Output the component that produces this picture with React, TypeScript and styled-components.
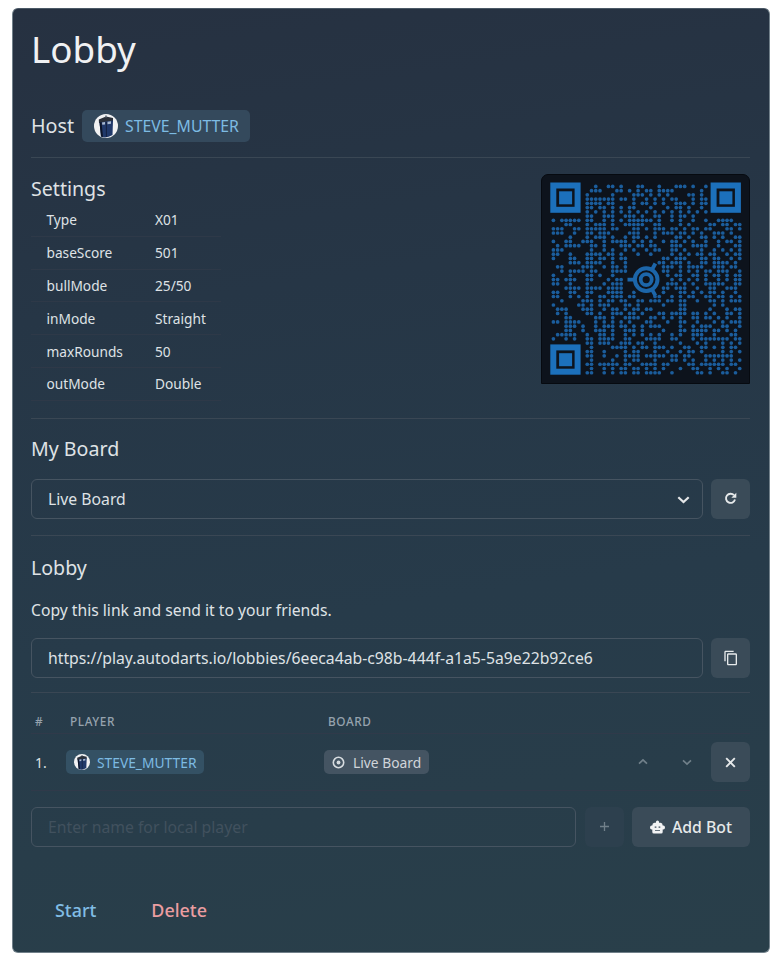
import React from 'react';
import styled, { createGlobalStyle } from 'styled-components';
import { MdContentCopy } from 'react-icons/md';

const Global = createGlobalStyle`
  * { box-sizing: border-box; }
  body { margin: 0; background: #fff; font-family: "Noto Sans", sans-serif; color: #dfe2e5; }
  h1, h2, p { margin: 0; font-weight: 400; }
  svg { display: block; flex: none; }
`;

const Panel = styled.main`
  width: 758px;
  height: 945px;
  margin: 8px 0 5px 12px;
  padding: 0 19px 0 18px;
  border-radius: 6px;
  border: 1px solid #71808a;
  border-top-color: #4b5966;
  background: linear-gradient(172deg, #263141 0%, #263646 30%, #273b4a 62%, #293f4a 100%);
  display: flex;
  flex-direction: column;
`;

const Title = styled.h1`
  height: 89px;
  padding-top: 13px;
  font-size: 36.8px;
  line-height: 54px;
  color: #f0f1f3;
`;

const HostRow = styled.div`
  display: flex;
  align-items: center;
  height: 60px;
  padding-bottom: 4px;
  gap: 8px;
  border-bottom: 1px solid #3a4754;
  font-size: 19.7px;
`;

const UserTag = styled.span<{ $large?: boolean }>`
  display: inline-flex;
  align-items: center;
  height: ${p => (p.$large ? 32 : 24)}px;
  width: ${p => (p.$large ? 168 : 138)}px;
  padding-left: ${p => (p.$large ? 12 : 8)}px;
  gap: 7px;
  border-radius: 5px;
  background: ${p => (p.$large ? '#34495c' : '#345164')};
  color: #7dbbe3;
  font-size: ${p => (p.$large ? 15.8 : 13.8)}px;
  white-space: nowrap;
`;

const SettingsSection = styled.section`
  display: flex;
  justify-content: space-between;
  height: 261px;
  padding-top: 16px;
  border-bottom: 1px solid #3a4754;
`;

const Heading = styled.h2`
  font-size: 19.6px;
  line-height: 30px;
  color: #dfe2e5;
`;

const SettingsList = styled.dl`
  margin: 0;
  width: 190px;
  font-size: 13.7px;
`;

const Setting = styled.div`
  display: flex;
  height: 32.8px;
  align-items: center;
  padding: 0 0 0 15.5px;
  border-bottom: 1px solid #2e3948;
  dt { width: 108.5px; }
  dd { margin: 0; }
`;

const CodeBox = styled.div`
  width: 209px;
  height: 210px;
  border-radius: 7px 7px 0 0;
  background: #0d131c;
  border: 1px solid #060a10;
  overflow: hidden;
`;

const BoardSection = styled.section`
  height: 117px;
  padding-top: 15px;
  border-bottom: 1px solid #3a4754;
`;

const LinkSection = styled(BoardSection)`
  height: 157px;
  padding-top: 17px;
  p { font-size: 15.7px; line-height: 24px; margin-top: 15px; }
`;

const FieldRow = styled.div<{ $top?: number }>`
  display: flex;
  gap: 8px;
  margin-top: ${p => p.$top ?? 16}px;
`;

const Field = styled.div<{ $muted?: boolean }>`
  flex: 1;
  height: 40px;
  display: flex;
  align-items: center;
  justify-content: space-between;
  padding: 0 12px 0 16px;
  border: 1px solid #465461;
  border-radius: 6px;
  font-size: 15.75px;
  color: ${p => (p.$muted ? '#41515e' : '#dfe2e5')};
`;

const Button = styled.button<{ $wide?: boolean; $dim?: boolean }>`
  width: ${p => (p.$wide ? 118 : 39)}px;
  height: 39.5px;
  flex: none;
  padding: 0;
  display: flex;
  align-items: center;
  justify-content: center;
  gap: 7px;
  border: 0;
  border-radius: 6px;
  background: ${p => (p.$dim ? '#2d404e' : '#3a4b58')};
  color: ${p => (p.$dim ? '#71808a' : '#e6e9ea')};
  font: 500 15.8px "Noto Sans", sans-serif;
  margin-left: ${p => (p.$dim ? 1 : 0)}px;
`;

const PlayerGrid = styled.div<{ $head?: boolean }>`
  display: grid;
  grid-template-columns: 35px 258px 314px 44px 29px 39px;
  align-items: center;
  height: ${p => (p.$head ? 41 : 57)}px;
  padding-top: ${p => (p.$head ? 15 : 0)}px;
  border-bottom: 1px solid #303a4a;
  font-size: ${p => (p.$head ? 11.8 : 14)}px;
  font-weight: ${p => (p.$head ? 500 : 400)};
  letter-spacing: ${p => (p.$head ? 0.6 : 0)}px;
  color: ${p => (p.$head ? '#96a3ae' : '#dfe2e5')};
  > :first-child { padding-left: 4px; }
  > [data-head] { padding-left: 4px; }
`;

const BoardTag = styled.span`
  display: inline-flex;
  align-items: center;
  width: 105px;
  height: 24px;
  padding-left: 8px;
  gap: 8px;
  border-radius: 5px;
  background: #445462;
  color: #d0d5da;
  font-size: 13.8px;
`;

const Actions = styled.footer`
  display: flex;
  padding: 49px 0 0 24px;
  gap: 55px;
  font-size: 17.9px;
  line-height: 28px;
  font-weight: 500;
`;

const Action = styled.span<{ $danger?: boolean }>`
  color: ${p => (p.$danger ? '#eb9da1' : '#80bce4')};
`;

const Avatar = ({ size }: { size: number }) => (
  <svg width={size} height={size} viewBox="0 0 24 24">
    <circle cx="12" cy="12" r="12" fill="#f1f2f3" />
    <path d="M4.800 5.500 12 2.500l7 1.500v4l-14 1z" fill="#2b313a" />
    <path d="M5.500 8.500 19 6.500 18.500 21Q12 25 7 22.500z" fill="#20396a" />
    <path d="M5.500 8.500 7.500 8 9 23 7 22.500z" fill="#0c1528" />
    <path d="M8 8.500 11 8v2.500l-2.700.2zM13.500 7.800 17 7.300v2.500l-3.500.4z" fill="#a9bad0" />
    <path d="M12.400 8v15" stroke="#101c35" strokeWidth="0.800" />
    <path d="M12 1.500v2" stroke="#65717c" strokeWidth="1.500" />
  </svg>
);

const Chevron = ({ up, size = 10, color }: { up?: boolean; size?: number; color: string }) => (
  <svg width={size} height={size} viewBox="0 0 10 10" fill="none" stroke={color} strokeWidth="1.700">
    <path d={up ? 'M1 6.700 5 3l4 3.700' : 'M1 3.300 5 7l4-3.700'} />
  </svg>
);

const Refresh = () => (
  <svg width="13" height="13" viewBox="0 0 13 13">
    <path d="M10 3.200A4.600 4.600 0 1 0 11 7.600" fill="none" stroke="currentColor" strokeWidth="1.900" />
    <path d="M12.300.800v5H7.300z" fill="currentColor" />
  </svg>
);

const Close = () => (
  <svg width="11" height="11" viewBox="0 0 11 11" fill="none" stroke="currentColor" strokeWidth="1.900">
    <path d="m1.200 1.200 8.600 8.600M9.800 1.200 1.200 9.800" />
  </svg>
);

const Target = () => (
  <svg width="13" height="13" viewBox="0 0 13 13">
    <circle cx="6.500" cy="6.500" r="5.200" fill="none" stroke="#d7dce0" strokeWidth="1.600" />
    <circle cx="6.500" cy="6.500" r="1.900" fill="#d7dce0" />
  </svg>
);

const Robot = () => (
  <svg width="15" height="14" viewBox="0 0 15 14">
    <path fill="#f2f3f4" fillRule="evenodd" d="M6 2.700a1.600 1.600 0 1 1 3 0h1.500Q12.700 2.900 12.700 5.500h.6Q15 5.700 15 7.500t-1.700 2h-.6v2.500q0 1.500-1.500 1.500H3.800Q2.300 13.500 2.300 12V9.500h-.6Q0 9.300 0 7.500t1.700-2h.6Q2.300 2.900 4.500 2.700zM4.700 6.400v1.300h1.700V6.400zm3.900 0v1.300h1.700V6.400zm-3.600 3.500v.9h5v-.9z" />
  </svg>
);

const Plus = () => (
  <svg width="11" height="11" viewBox="0 0 11 11" stroke="currentColor" strokeWidth="1.300">
    <path d="M5.500 1v9M1 5.500h9" />
  </svg>
);

const leftModules = [
  '..........#..##.#...##', '.........###...##.#.#.', '........#.....#....###', '........#######.##.#..',
  '........####.##....#.#', '........##.##.#.#.##..', '........#.#.#.#.#.#.#.', '........##..###..###.#',
  '#.#####.##..#.#.#.####', '...##...#.###.#..#####', '###..##.#####.##...##.', '###..#..##.###....###.',
  '....#...#.###.#..#.##.', '#..##..###..#.####.#.#', '.#.####..##.#...###.##', '###......#..#.#..#.#..',
  '##..#...####.##.#...#.', '#...##..##.##.#.##....', '....###.####..#..#....', '.##....###..#.##.#....',
  '..#.####.##...####....', '#...#...##.#..#.......', '##.###..##...#.##.....', '##..#...#...#.###.....',
  '...####.####.####.....', '##..##..##...####..#..', '##..#.#.#..##.###.##..', '..#....###.#.##.##..##',
  '#.....##.#.###...##.#.', '.###...###..#.##.#.##.', '.#.#....##.#..###.##.#', '...##.....###.#..####.',
  '##.####...#.#.#.#.#...', '...###.#..#.###.##.#.#', '...##..#..###.#..###.#', '.#####..#..##.#..#.#.#',
  '#..#.#..##.####..##...', '........##.###..###.##', '.........#....####.#.#', '........##..#....#.##.',
  '........##..#..#.####.', '.........#....#..#.##.', '........##.#####.##..#', '.........#..#.#.##.##.',
  '........##..#.#.##.##.',
];

const rightModules = [
  '...#...###.#..#', '##.####......#.', '.#.#.#....##.#.', '#.#.#.##...#.##', '#.#.#..###.#.##',
  '.#...#.##.#..#.', '#.#.#.#.#.#.#.#', '..##..#.##.#...', '##.#..#.#..#..#..####..', '..##....#.#....##.##.##',
  '#.###.##.#.##.##...##.#', '..#.###.##.#.#..###.#..', '#.#....##.#..##.#.#..##', '.#..#.##.#.#..#..#.##.#',
  '.##...###..####..#...##', '#.##..##.#...#..#.#.#.#', '.#....#.#.#.##.##..#.##', '....##.###...##.##..#.#',
  '...##.###.#..##.####.#.', '....###.#.####..###.##.', '....##..#.#.#.##.###..#', '.....#.##..##.#.##.#.##',
  '......#.#.#.#.#..#.#.##', '.....###.#.#..#####..##', '....##.###..#..##..###.', '....#...##.#.#.##.#..#.',
  '..##..#.#.##..##.##.#.#', '.###.##.##..#..##.#.###', '....#...##......#.#....', '##......##.....#...#.##',
  '...##.####.##.#.#..##.#', '.##.#.#.#..##.##.#.#..#', '##...#..##..#...#.#.###', '.###....#..#.###..##..#',
  '....#...##.####.##.#.#.', '.#.#..#.#..###..#...##.', '####..##...#.#######.##', '..#.....#...#.#...#.#.#',
  '#.###.#..##..##.#.#.##.', '..#..#..#.##.#....#.#.#', '#####.##.##...#######..', '..#...##.#.#..#.#.#.#.#',
  '###.##....##.######.##.', '#.#.#...#..##..#.#.#..#', '####..#.....##.#..##.#.',
];

const PITCH = 4.235;

const Finder = ({ x, y }: { x: number; y: number }) => (
  <g transform={`translate(${x} ${y})`}>
    <rect x="3" y="3" width="24.300" height="24.300" fill="none" stroke="#1c70bb" strokeWidth="6" />
    <rect x="8.800" y="8.800" width="13" height="13" fill="#1c70bb" />
  </g>
);

const QrCode = () => (
  <svg width="207" height="208" viewBox="542 175 207 208">
    {leftModules.map((left, r) =>
      (left + (rightModules[r] ?? '')).split('').map((m, c) =>
        m === '#' ? (
          <circle key={`${r}-${c}`} cx={553.4 + c * PITCH} cy={186.4 + r * PITCH} r="1.850" fill="#1b5d9c" />
        ) : null,
      ),
    )}
    <Finder x={550.3} y={182.5} />
    <Finder x={710.6} y={182.5} />
    <Finder x={550.3} y={344.4} />
    <circle cx="646.200" cy="279.600" r="16" fill="#0d131c" />
    <g fill="none" stroke="#1c66aa">
      <circle cx="646.200" cy="279.600" r="11.300" strokeWidth="4" />
      <circle cx="646.200" cy="279.600" r="5.500" strokeWidth="3.800" />
      <path d="M627.500 279.600h7M651.800 270l3.600-6.500M651.800 289.200l3.600 6.500" strokeWidth="3.800" />
    </g>
  </svg>
);

const settings = [
  ['Type', 'X01'], ['baseScore', '501'], ['bullMode', '25/50'],
  ['inMode', 'Straight'], ['maxRounds', '50'], ['outMode', 'Double'],
];

export default function App() {
  return (
    <>
      <Global />
      <Panel>
        <Title>Lobby</Title>
        <HostRow>
          Host <UserTag $large><Avatar size={24} />STEVE_MUTTER</UserTag>
        </HostRow>
        <SettingsSection>
          <div>
            <Heading>Settings</Heading>
            <SettingsList>
              {settings.map(([name, value]) => (
                <Setting key={name}><dt>{name}</dt><dd>{value}</dd></Setting>
              ))}
            </SettingsList>
          </div>
          <CodeBox><QrCode /></CodeBox>
        </SettingsSection>
        <BoardSection>
          <Heading>My Board</Heading>
          <FieldRow $top={15}>
            <Field>Live Board<Chevron size={13} color="#e4e6e8" /></Field>
            <Button aria-label="Refresh"><Refresh /></Button>
          </FieldRow>
        </BoardSection>
        <LinkSection>
          <Heading>Lobby</Heading>
          <p>Copy this link and send it to your friends.</p>
          <FieldRow>
            <Field>https://play.autodarts.io/lobbies/6eeca4ab-c98b-444f-a1a5-5a9e22b92ce6</Field>
            <Button aria-label="Copy link"><MdContentCopy size={16} /></Button>
          </FieldRow>
        </LinkSection>
        <PlayerGrid $head>
          <span>#</span><span data-head>PLAYER</span><span data-head>BOARD</span>
        </PlayerGrid>
        <PlayerGrid>
          <span>1.</span>
          <UserTag><Avatar size={16} />STEVE_MUTTER</UserTag>
          <BoardTag><Target />Live Board</BoardTag>
          <Chevron up color="#71808a" />
          <Chevron color="#71808a" />
          <Button aria-label="Remove player"><Close /></Button>
        </PlayerGrid>
        <FieldRow>
          <Field $muted>Enter name for local player</Field>
          <Button $dim aria-label="Add player"><Plus /></Button>
          <Button $wide><Robot />Add Bot</Button>
        </FieldRow>
        <Actions>
          <Action>Start</Action>
          <Action $danger>Delete</Action>
        </Actions>
      </Panel>
    </>
  );
}
